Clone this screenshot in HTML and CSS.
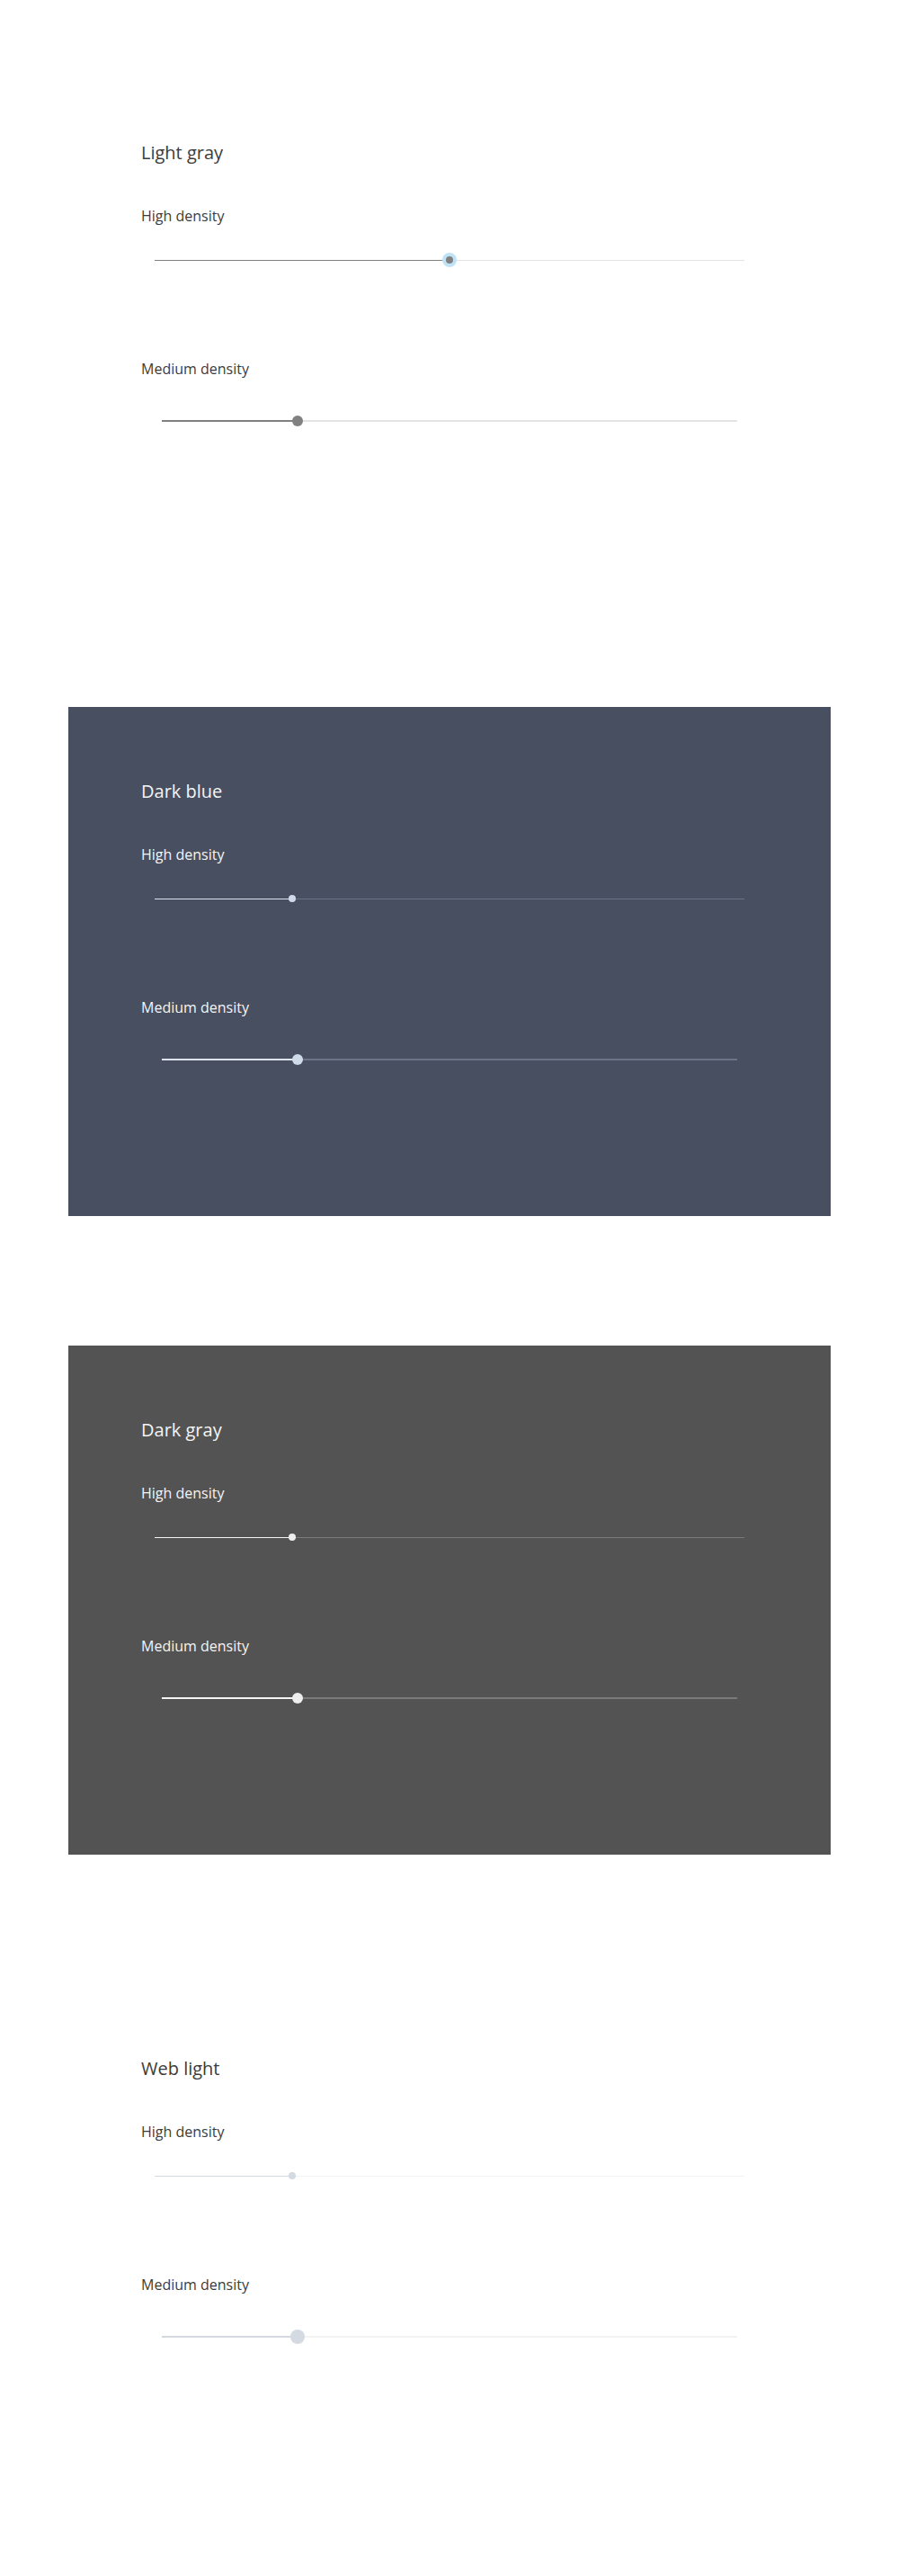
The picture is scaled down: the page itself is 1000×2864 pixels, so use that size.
FILE: index.html
```html
<!DOCTYPE html>
<html lang="en">
<head>
<meta charset="utf-8">
<title>Slider themes</title>
<link rel="stylesheet" href="styles.css">
</head>
<body>
<main class="page">
  <section class="panel light-gray">
    <h2 class="title">Light gray</h2>
    <div class="label">High density</div>
    <div class="slider high" style="--v:50%"><div class="rail"><div class="fill"></div><span class="thumb focus"></span></div></div>
    <div class="label medium-label">Medium density</div>
    <div class="slider medium" style="--v:23.6%"><div class="rail"><div class="fill"></div><span class="thumb"></span></div></div>
  </section>
  <section class="panel dark-blue">
    <h2 class="title">Dark blue</h2>
    <div class="label">High density</div>
    <div class="slider high" style="--v:23.3%"><div class="rail"><div class="fill"></div><span class="thumb"></span></div></div>
    <div class="label medium-label">Medium density</div>
    <div class="slider medium" style="--v:23.6%"><div class="rail"><div class="fill"></div><span class="thumb"></span></div></div>
  </section>
  <section class="panel dark-gray">
    <h2 class="title">Dark gray</h2>
    <div class="label">High density</div>
    <div class="slider high" style="--v:23.3%"><div class="rail"><div class="fill"></div><span class="thumb"></span></div></div>
    <div class="label medium-label">Medium density</div>
    <div class="slider medium" style="--v:23.6%"><div class="rail"><div class="fill"></div><span class="thumb"></span></div></div>
  </section>
  <section class="panel web-light">
    <h2 class="title">Web light</h2>
    <div class="label">High density</div>
    <div class="slider high" style="--v:23.3%"><div class="rail"><div class="fill"></div><span class="thumb"></span></div></div>
    <div class="label medium-label">Medium density</div>
    <div class="slider medium" style="--v:23.6%"><div class="rail"><div class="fill"></div><span class="thumb"></span></div></div>
  </section>
</main>
</body>
</html>
```
FILE: styles.css
```css
html, body {
  margin: 0;
  padding: 0;
  background: #ffffff;
}
body {
  font-family: "Open Sans", "Noto Sans", sans-serif;
}
.page {
  display: flex;
  flex-direction: column;
  gap: 144px;
  padding: 76px 76px 92px;
}
.panel {
  width: 848px;
  height: 566px;
  box-sizing: border-box;
  padding: 80px 81px 0;
  display: flex;
  flex-direction: column;
}
.title {
  margin: 0;
  font-size: 20px;
  line-height: 28px;
  font-weight: 400;
}
.label {
  margin-top: 45px;
  font-size: 16px;
  line-height: 22px;
}
.medium-label {
  margin-top: 98px;
}
.slider {
  height: 24px;
  display: flex;
  align-items: center;
  margin-top: 26px;
}
.slider.medium {
  margin-top: 35px;
}
.slider.high .rail {
  margin: 0 15px;
  height: 1px;
}
.slider.medium .rail {
  margin: 0 23px;
  height: 2px;
}
.rail {
  position: relative;
  flex: 1;
}
.fill {
  width: var(--v);
  height: 100%;
}
.thumb {
  position: absolute;
  left: var(--v);
  top: 50%;
  transform: translate(-50%, -50%);
  border-radius: 50%;
}
.high .thumb { width: 8px; height: 8px; }
.medium .thumb { width: 12px; height: 12px; }

/* light gray */
.light-gray { background: #ffffff; color: #3c3c3c; }
.light-gray .rail { background: #e3e3e3; }
.light-gray .fill { background: #808080; }
.light-gray .thumb { background: #808080; }
.light-gray .thumb.focus { box-shadow: 0 0 0 4px #bfe3f5; }

/* dark blue */
.dark-blue { background: #474f61; color: #f5f5f5; }
.dark-blue .rail { background: #6b7386; }
.dark-blue .fill { background: #dce3ee; }
.dark-blue .thumb { background: #cfdbe9; }

/* dark gray */
.dark-gray { background: #535353; color: #f5f5f5; }
.dark-gray .rail { background: #7a7a7a; }
.dark-gray .fill { background: #f5f5f5; }
.dark-gray .thumb { background: #eeeeee; }

/* web light */
.web-light { background: #ffffff; color: #3c3c3c; }
.web-light .rail { background: #f3f3f3; }
.web-light .fill { background: #d3d9e0; }
.web-light .thumb { background: #d3dae2; }
.web-light .high .thumb { width: 8px; height: 8px; }
.web-light .medium .thumb { width: 16px; height: 16px; }
```
